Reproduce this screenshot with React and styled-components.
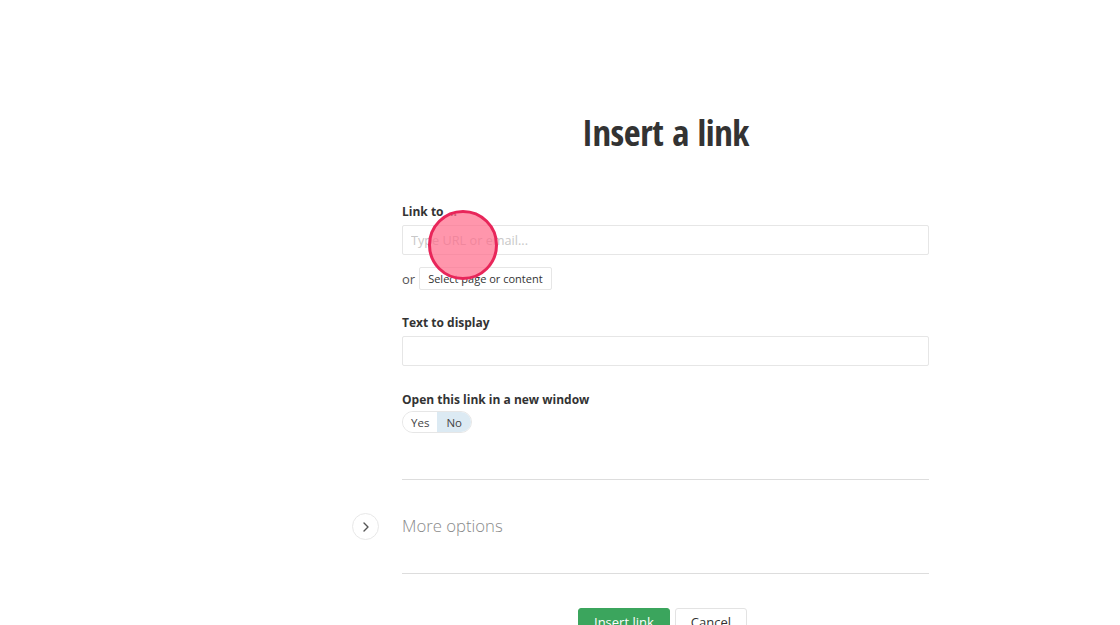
import React from "react";
import styled, { createGlobalStyle } from "styled-components";

const GlobalStyle = createGlobalStyle`
  html, body {
    margin: 0;
    padding: 0;
    background: #fff;
    font-family: "Open Sans", "Noto Sans", sans-serif;
    color: #333;
  }
  * { box-sizing: border-box; }
`;

const Page = styled.div`
  position: relative;
  width: 1120px;
  height: 625px;
  overflow: hidden;
  padding-left: 402px;
`;

const Column = styled.div`
  width: 527px;
  padding-top: 108px;
  display: flex;
  flex-direction: column;
  & > * { flex-shrink: 0; }
`;

const Title = styled.h1`
  margin: 0 0 47px;
  text-align: center;
  font-family: "Open Sans Condensed", "Liberation Sans Narrow", "Open Sans", sans-serif;
  font-weight: 700;
  font-size: 36.5px;
  line-height: 48px;
  color: #333;
  letter-spacing: -0.4px;
`;

const Field = styled.div`
  display: flex;
  flex-direction: column;
  margin-bottom: ${p => p.$gap || 0}px;
`;

const Label = styled.label`
  font-size: 12px;
  font-weight: 700;
  line-height: 18px;
  color: #333;
  margin-bottom: ${p => (p.$tight ? 2 : 4)}px;
`;

const Input = styled.input`
  width: 100%;
  height: 30px;
  border: 1px solid #e6e6e6;
  border-radius: 2px;
  padding: 0 8px;
  font-family: inherit;
  font-size: 12.7px;
  color: #333;
  outline: none;
  &::placeholder { color: #c8c8c8; }
`;

const OrRow = styled.div`
  display: flex;
  align-items: center;
  gap: 4px;
  margin-top: 12px;
  font-size: 13px;
  line-height: 18px;
  color: #555;
`;

const SmallButton = styled.button`
  height: 23px;
  padding: 0 8px;
  border: 1px solid #e6e6e6;
  border-radius: 2px;
  background: #fff;
  font-family: inherit;
  font-size: 11px;
  color: #333;
`;

const Toggle = styled.div`
  display: inline-flex;
  align-self: flex-start;
  border: 1px solid #e6e6e6;
  border-radius: 11px;
  overflow: hidden;
  height: 22px;
`;

const ToggleItem = styled.span`
  display: flex;
  align-items: center;
  padding: 0 ${p => p.$pad}px;
  font-size: 11.5px;
  color: #444;
  background: ${p => (p.$active ? "#dceaf3" : "#fff")};
`;

const Rule = styled.hr`
  border: none;
  border-top: 1px solid #ddd;
  margin: 0;
`;

const MoreRow = styled.div`
  position: relative;
  height: 93px;
  display: flex;
  align-items: center;
  padding-bottom: 3px;
`;

const MoreToggle = styled.span`
  position: absolute;
  left: -50px;
  top: 33px;
  width: 27px;
  height: 27px;
  border: 1px solid #e8e8e8;
  border-radius: 50%;
  display: flex;
  align-items: center;
  justify-content: center;
`;

const MoreText = styled.span`
  font-size: 16.7px;
  font-weight: 300;
  color: #8a8a8a;
`;

const Actions = styled.div`
  display: flex;
  justify-content: center;
  gap: 5px;
  margin-top: 34px;
  padding-right: 6px;
`;

const ActionButton = styled.button`
  height: 32px;
  padding: 0 15px;
  border-radius: 3px;
  border: 1px solid ${p => (p.$primary ? "#3ba55d" : "#e3e3e3")};
  background: ${p => (p.$primary ? "#3ba55d" : "#fff")};
  color: ${p => (p.$primary ? "#fff" : "#333")};
  font-family: inherit;
  font-size: 13px;
  line-height: 26px;
  display: flex;
  align-items: flex-start;
`;

const ClickMark = styled.div`
  position: absolute;
  left: 428px;
  top: 210px;
  width: 70px;
  height: 70px;
  border-radius: 50%;
  border: 3px solid #e8265a;
  background: rgba(255, 110, 140, 0.72);
  pointer-events: none;
`;

export default function App() {
  return (
    <>
      <GlobalStyle />
      <Page>
        <Column>
          <Title>Insert a link</Title>
          <Field $gap={24}>
            <Label>Link to ...</Label>
            <Input placeholder="Type URL or email..." />
            <OrRow>
              or <SmallButton>Select page or content</SmallButton>
            </OrRow>
          </Field>
          <Field $gap={25}>
            <Label>Text to display</Label>
            <Input />
          </Field>
          <Field $gap={46}>
            <Label $tight>Open this link in a new window</Label>
            <Toggle>
              <ToggleItem $pad={8}>Yes</ToggleItem>
              <ToggleItem $pad={9} $active>No</ToggleItem>
            </Toggle>
          </Field>
          <Rule />
          <MoreRow>
            <MoreToggle>
              <svg width="10" height="12" viewBox="0 0 10 12" fill="none">
                <path d="M3 2 L7 6 L3 10" stroke="#555" strokeWidth="1.4" strokeLinecap="round" strokeLinejoin="round" />
              </svg>
            </MoreToggle>
            <MoreText>More options</MoreText>
          </MoreRow>
          <Rule />
          <Actions>
            <ActionButton $primary>Insert link</ActionButton>
            <ActionButton>Cancel</ActionButton>
          </Actions>
        </Column>
        <ClickMark />
      </Page>
    </>
  );
}
